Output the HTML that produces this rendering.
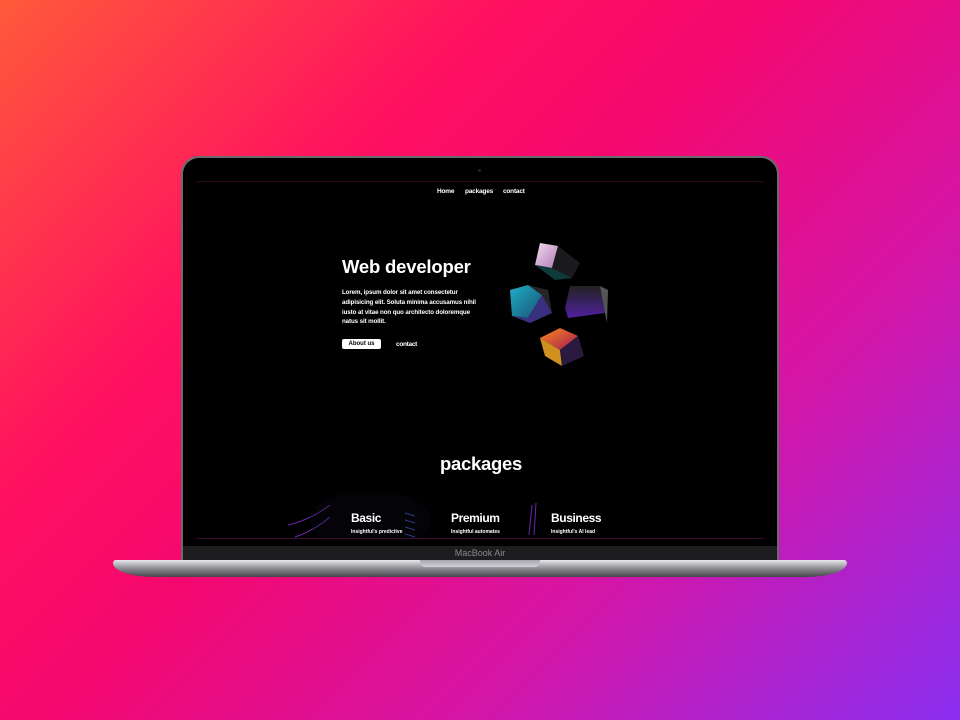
<!DOCTYPE html>
<html><head><meta charset="utf-8"><style>
*{margin:0;padding:0;box-sizing:border-box}
body{width:960px;height:720px;overflow:hidden;position:relative;font-family:"Liberation Sans",sans-serif;
background:linear-gradient(135deg,#ff5a3a 0%,#ff1060 30%,#f5086e 45%,#d515a5 70%,#8a2ef0 100%);}
.lid{position:absolute;left:181px;top:156px;width:598px;height:406px;background:#000;border-radius:18px 18px 0 0;border:2px solid #6a6a70;border-bottom:none}
.cam{position:absolute;left:478px;top:169px;width:3px;height:3px;border-radius:50%;background:#222}
.ln{position:absolute;left:196px;width:568px;height:1px;background:#2a0814}
.nav{position:absolute;top:188px;font-size:6.5px;font-weight:bold;color:#fff;letter-spacing:-0.2px}
.t{color:#fff;position:absolute;font-weight:bold;letter-spacing:-0.3px}
.chin{position:absolute;left:183px;top:546px;width:594px;height:15px;background:#1d1d1f;color:#8a8a8e;font-size:9px;text-align:center;line-height:15px}
.base{position:absolute;left:113px;top:560px;width:734px;height:17px;border-radius:3px 3px 40px 40px/3px 3px 14px 14px;background:linear-gradient(#e8e8ec 0%,#b8b8be 25%,#7c7c82 60%,#45454a 100%)}
.notch{position:absolute;left:420px;top:560px;width:120px;height:7px;background:linear-gradient(#a4a4aa,#d0d0d6);border-radius:0 0 5px 5px}
</style></head><body>
<div class="lid"></div>
<div class="cam"></div>
<div class="ln" style="top:181px"></div>
<div class="nav" style="left:437px">Home</div>
<div class="nav" style="left:465px">packages</div>
<div class="nav" style="left:503px">contact</div>
<div class="t" style="left:342px;top:256px;font-size:18.5px;letter-spacing:-0.2px">Web developer</div>
<div class="t" style="left:342px;top:288px;font-size:6.2px;line-height:9.8px;width:136px;letter-spacing:-0.1px">Lorem, ipsum dolor sit amet consectetur adipisicing elit. Soluta minima accusamus nihil iusto at vitae non quo architecto doloremque natus sit mollit.</div>
<div style="position:absolute;left:342px;top:339px;width:39px;height:10px;background:#fff;border-radius:2px;font-size:6px;font-weight:bold;text-align:center;line-height:10px">About us</div>
<div class="t" style="left:396px;top:341px;font-size:6.5px">contact</div>
<svg style="position:absolute;left:500px;top:238px" width="115" height="132" viewBox="0 0 115 132">
<defs>
<linearGradient id="a" x1="0" y1="0" x2="1" y2="1"><stop offset="0" stop-color="#f4dcf0"/><stop offset="1" stop-color="#b07ab8"/></linearGradient>
<linearGradient id="b" x1="0" y1="0" x2="1" y2="1"><stop offset="0" stop-color="#1fb0c8"/><stop offset="1" stop-color="#1a5070"/></linearGradient>
<linearGradient id="c" x1="0" y1="0" x2="1" y2="1"><stop offset="0" stop-color="#ff8a20"/><stop offset="1" stop-color="#a01850"/></linearGradient>
<linearGradient id="d" x1="0" y1="0" x2="0" y2="1"><stop offset="0" stop-color="#222"/><stop offset="1" stop-color="#5020a0"/></linearGradient>
</defs>
<polygon points="40,5 58,8 52,30 35,27" fill="url(#a)"/><polygon points="58,8 80,25 72,40 52,30" fill="#1a1a1c"/><polygon points="35,27 52,30 72,40 55,42" fill="#0f3a3a"/>
<polygon points="10,52 28,47 42,57 28,80 12,78" fill="url(#b)"/><polygon points="28,47 48,52 52,75 42,57" fill="#252528"/><polygon points="12,78 28,80 42,57 52,75 30,85" fill="#3a3080"/>
<polygon points="70,48 100,48 105,75 68,80 65,70" fill="url(#d)"/><polygon points="100,48 108,52 107,85 105,75" fill="#555"/>
<polygon points="40,100 60,90 78,98 60,112" fill="url(#c)"/><polygon points="40,100 60,112 62,128 45,118" fill="#d09020"/><polygon points="60,112 78,98 84,118 62,128" fill="#2a1a40"/>
</svg>
<div class="t" style="left:440px;top:453px;font-size:18.5px;letter-spacing:-0.3px">packages</div>
<svg style="position:absolute;left:280px;top:495px" width="330" height="45"><g fill="none" stroke="#6a2ab0" stroke-width="1"><path d="M8,30 Q30,25 50,10"/><path d="M15,42 Q35,35 50,22"/><path d="M125,18 l10,3 M125,25 l10,3 M125,32 l10,3 M125,39 l10,3" stroke="#3050a0"/><path d="M252,10 L249,40 M256,8 L254,40"/></g><ellipse cx="90" cy="25" rx="60" ry="30" fill="#0a0a1e" opacity="0.25"/></svg>
<div class="t" style="left:351px;top:511px;font-size:12px;letter-spacing:-0.4px">Basic</div>
<div class="t" style="left:451px;top:511px;font-size:12px;letter-spacing:-0.4px">Premium</div>
<div class="t" style="left:551px;top:511px;font-size:12px;letter-spacing:-0.4px">Business</div>
<div class="t" style="left:351px;top:529px;font-size:5px;letter-spacing:0">Insightful's predictive</div>
<div class="t" style="left:451px;top:529px;font-size:5px;letter-spacing:0">Insightful automates</div>
<div class="t" style="left:551px;top:529px;font-size:5px;letter-spacing:0">Insightful's AI lead</div>
<div class="ln" style="top:538px;background:#3a0a30"></div>
<div style="position:absolute;left:183px;top:539px;width:594px;height:7px;background:#000"></div>
<div class="chin">MacBook Air</div>
<div class="base"></div>
<div class="notch"></div>
</body></html>
